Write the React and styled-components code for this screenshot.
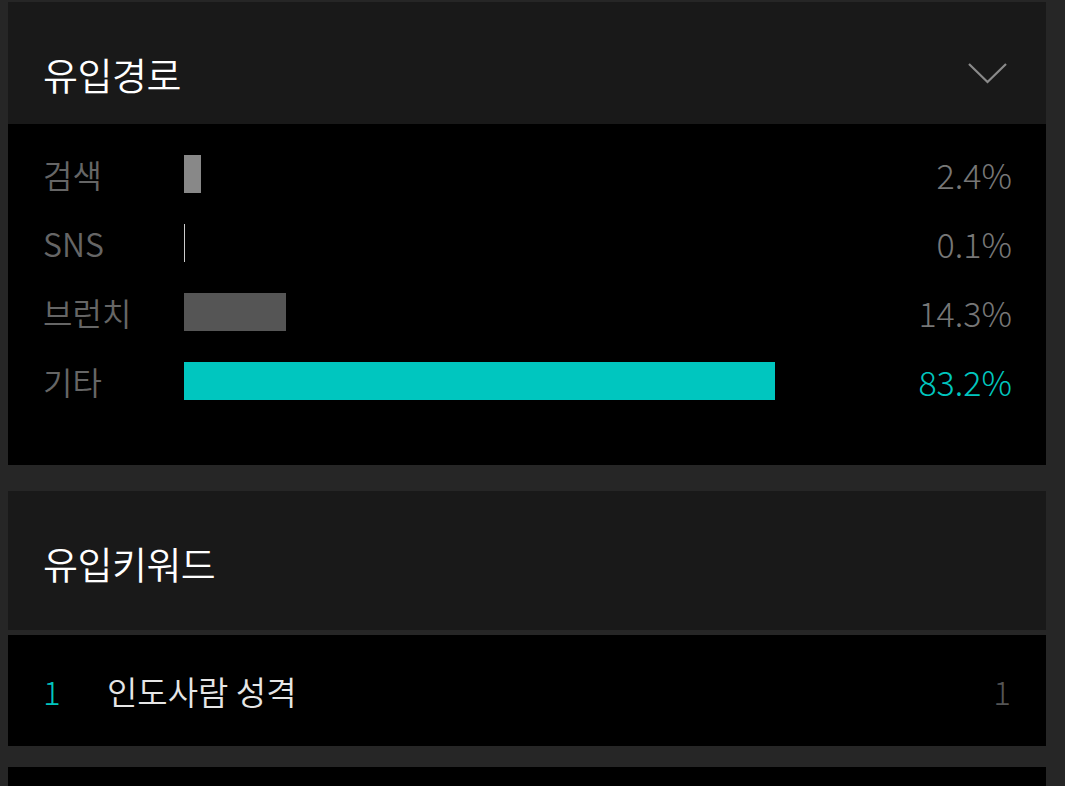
import React from "react";
import styled, { createGlobalStyle } from "styled-components";

const GlobalStyle = createGlobalStyle`
  html, body {
    margin: 0;
    padding: 0;
    background: #262626;
  }
  body {
    font-family: "Noto Sans CJK KR", "Noto Sans", sans-serif;
  }
`;

const Page = styled.div`
  padding: 2px 19px 0 8px;
  display: flex;
  flex-direction: column;
  min-height: 786px;
  box-sizing: border-box;
`;

const Section = styled.section`
  display: flex;
  flex-direction: column;
  margin-bottom: ${(p) => p.gap || 0}px;
`;

const Header = styled.div`
  height: ${(p) => p.h}px;
  background: #191919;
  display: flex;
  align-items: center;
  justify-content: space-between;
  padding: ${(p) => p.pt || 0}px 38px 0 35px;
  box-sizing: border-box;
`;

const Title = styled.h2`
  margin: 0;
  font-size: 38px;
  font-weight: 350;
  color: #ffffff;
  letter-spacing: -0.5px;
`;

const Chevron = styled.svg`
  width: 40px;
  height: 24px;
  display: block;
`;

const Body = styled.div`
  background: #000;
  padding: 31px 34px 65px 35px;
  display: flex;
  flex-direction: column;
  gap: 31px;
`;

const Row = styled.div`
  display: flex;
  align-items: center;
  height: 38px;
`;

const Label = styled.span`
  width: 141px;
  flex: none;
  font-size: 32px;
  font-weight: 350;
  color: #666;
`;

const Track = styled.div`
  flex: 1;
  height: 38px;
  display: flex;
`;

const Bar = styled.div`
  height: 100%;
  background: ${(p) => p.color};
`;

const Value = styled.span`
  font-size: 34px;
  font-weight: 300;
  color: ${(p) => (p.active ? "#00c6bf" : "#777")};
`;

const Divider = styled.div`
  height: 5px;
  background: #262626;
`;

const KeywordRow = styled.div`
  background: #000;
  height: 111px;
  display: flex;
  align-items: center;
  padding: 0 35px 0 35px;
  box-sizing: border-box;
`;

const Rank = styled.span`
  width: 64px;
  font-size: 33px;
  font-weight: 300;
  color: #00c6bf;
`;

const Keyword = styled.span`
  flex: 1;
  font-size: 33px;
  font-weight: 350;
  color: #e6e6e6;
`;

const Count = styled.span`
  font-size: 33px;
  font-weight: 300;
  color: #555;
`;

const Next = styled.div`
  background: #000;
  flex: 1;
`;

const sources = [
  { label: "검색", pct: 2.4, color: "#888" },
  { label: "SNS", pct: 0.1, color: "#ccc", min: 1 },
  { label: "브런치", pct: 14.3, color: "#555" },
  { label: "기타", pct: 83.2, color: "#00c6bf", active: true },
];

export default function App() {
  return (
    <>
      <GlobalStyle />
      <Page>
        <Section gap={26}>
          <Header h={122} pt={20}>
            <Title>유입경로</Title>
            <Chevron viewBox="0 0 40 24">
              <polyline
                points="1,3 19.5,21 38,3"
                fill="none"
                stroke="#8a8a8a"
                strokeWidth="2.2"
              />
            </Chevron>
          </Header>
          <Body>
            {sources.map((s) => (
              <Row key={s.label}>
                <Label>{s.label}</Label>
                <Track>
                  <Bar
                    color={s.color}
                    style={{ width: s.min ? `${s.min}px` : `${s.pct * 7.1}px` }}
                  />
                </Track>
                <Value active={s.active}>{s.pct}%</Value>
              </Row>
            ))}
          </Body>
        </Section>
        <Section gap={21}>
          <Header h={139} pt={3}>
            <Title>유입키워드</Title>
          </Header>
          <Divider />
          <KeywordRow>
            <Rank>1</Rank>
            <Keyword>인도사람 성격</Keyword>
            <Count>1</Count>
          </KeywordRow>
        </Section>
        <Next />
      </Page>
    </>
  );
}
